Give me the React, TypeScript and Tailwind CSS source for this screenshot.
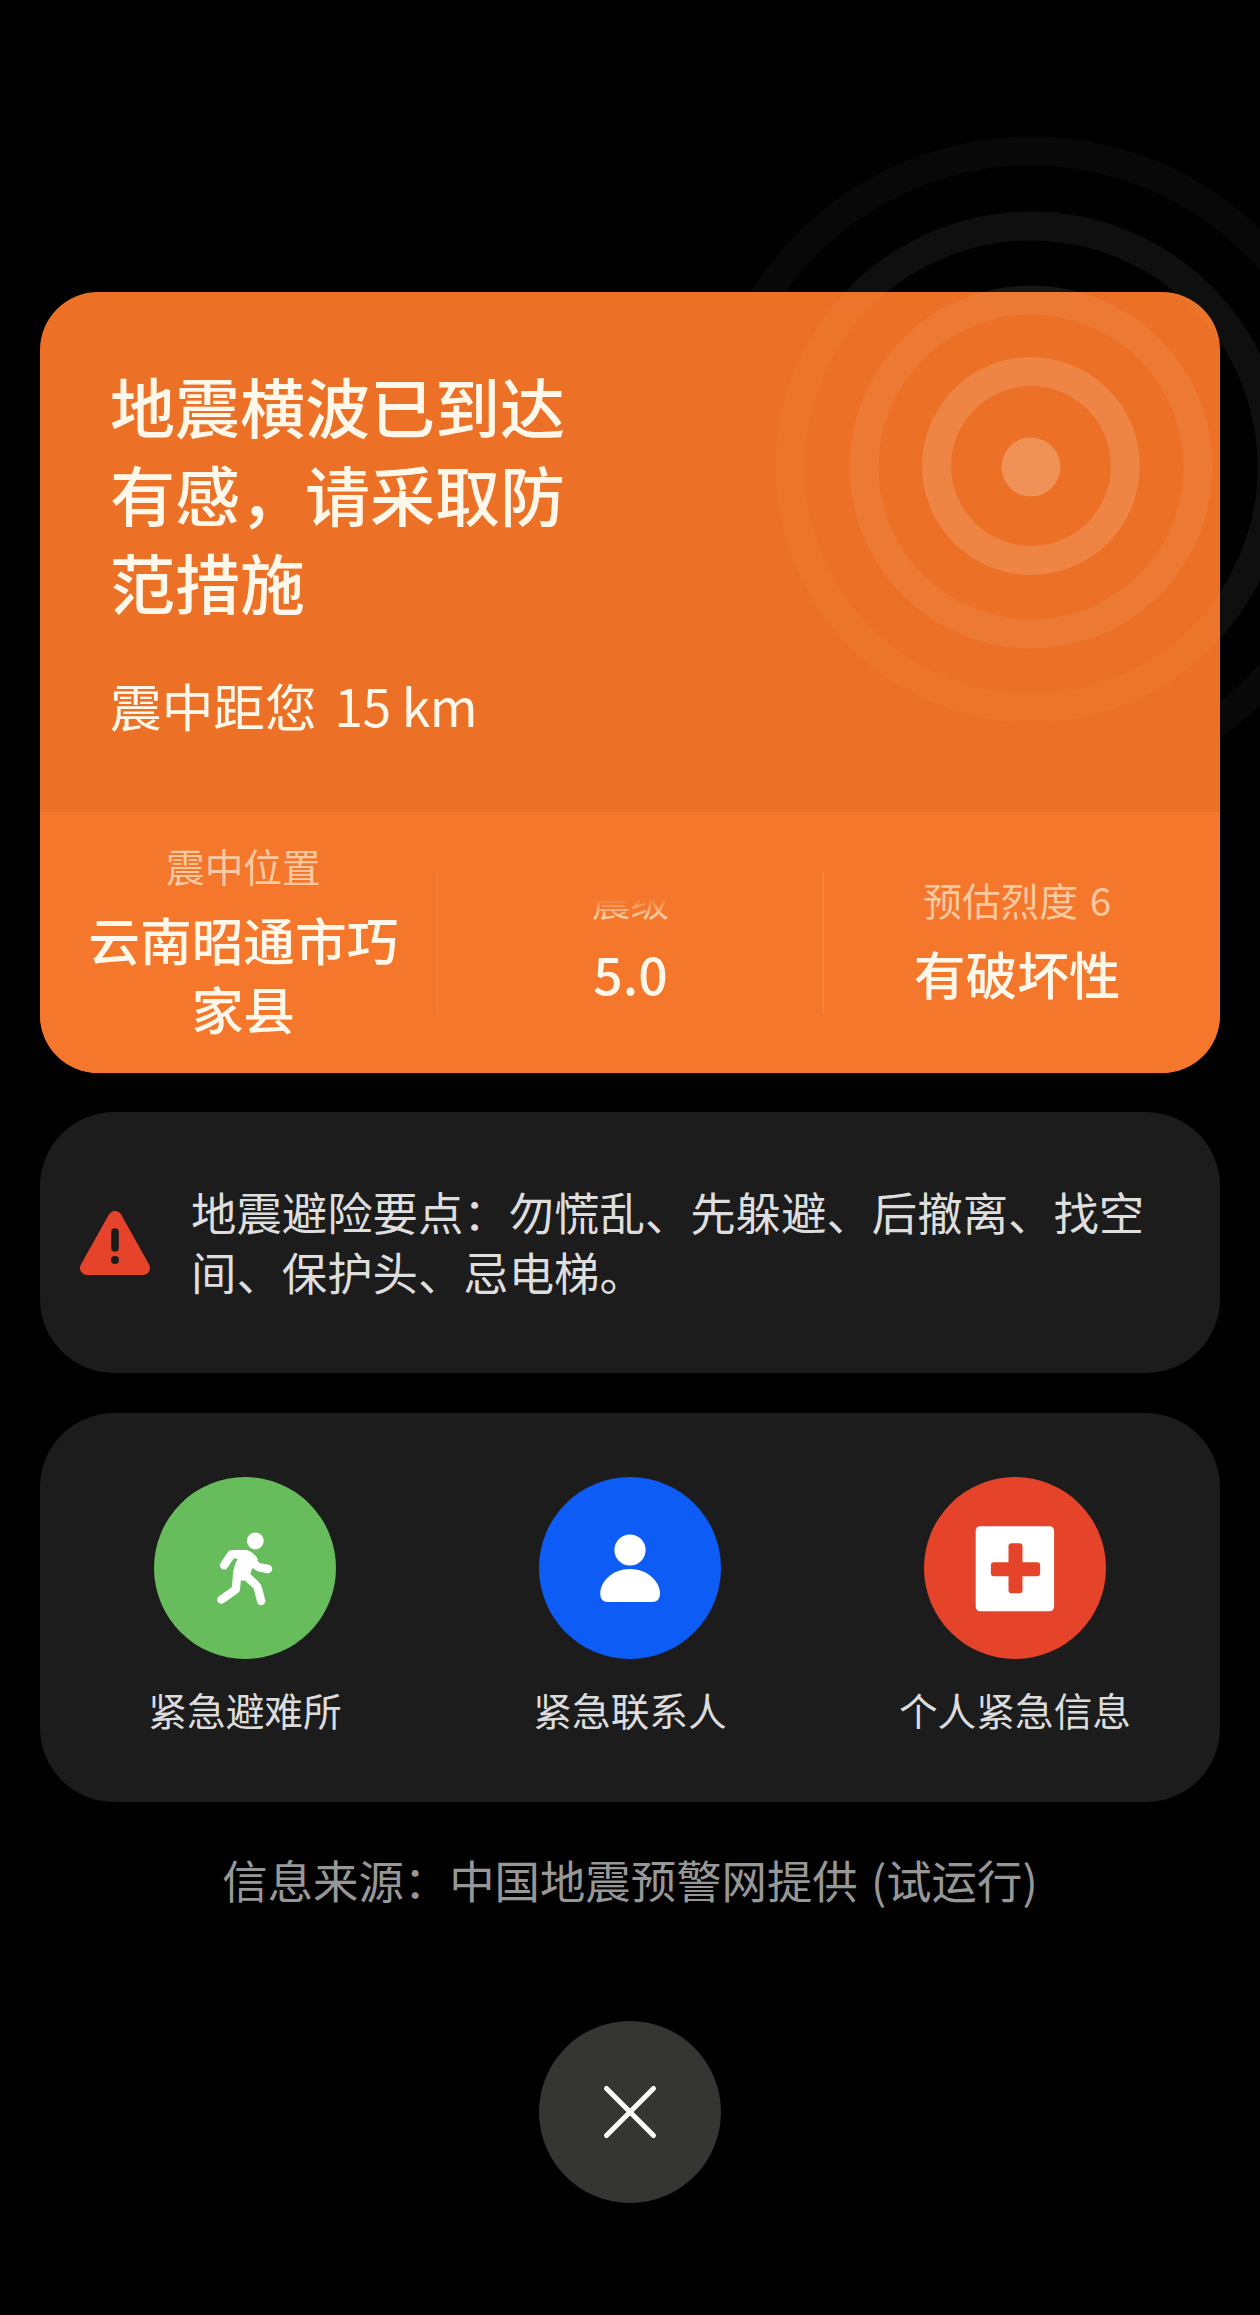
import type { ReactNode } from "react";
import { clsx } from "clsx";

const stats = [
    { label: "震中位置", value: "云南昭通市巧家县" },
    { label: "震级", value: "5.0", fading: true },
    { label: "预估烈度 6", value: "有破坏性" },
];

function RunnerIcon() {
    return (
        <svg viewBox="0 0 182 182" className="size-full" fill="none" stroke="#fff" strokeWidth="8.4" strokeLinecap="round" strokeLinejoin="round">
            <circle cx="101.3" cy="64" r="8.4" fill="#fff" stroke="none" />
            <path d="M77 73 H91 Q98 73.5 104 82 L100 90 Q97 92 97 96 L89.5 104 L79 101 Q78.2 92 83.5 82 Z" fill="#fff" stroke="none" />
            <path d="M70 88.3 L77.6 77.2 H91 Q95 77.5 98.5 83 Q101 89 105.5 90.4 L114 92" />
            <path d="M83.2 98 L81.8 112.4 L67.4 122.6" />
            <path d="M89.5 96.7 L102 108 Q103.6 109.5 104.3 113 L107.2 124" />
        </svg>
    );
}

function ContactIcon() {
    return (
        <svg viewBox="0 0 182 182" className="size-full" fill="#fff">
            <circle cx="91" cy="73" r="15.6" />
            <path d="M61.2 116.5 C61.2 105 73 92 91 92 S121 105 121 116.5 Q121 125 113 125 H69 Q61.2 125 61.2 116.5 Z" />
        </svg>
    );
}

function MedicalIcon() {
    return (
        <svg viewBox="0 0 182 182" className="size-full">
            <rect x="51.7" y="49.3" width="78.4" height="85" rx="4.5" fill="#fff" />
            <rect x="84.5" y="66.3" width="14" height="50" rx="3" fill="#e6432b" />
            <rect x="66.9" y="85.3" width="49.2" height="14" rx="3" fill="#e6432b" />
        </svg>
    );
}

function WarningIcon() {
    return (
        <svg viewBox="0 0 70 64" className="w-[70px] h-16 shrink-0">
            <path d="M35 7 L7 57 H63 Z" fill="#e6432b" stroke="#e6432b" strokeWidth="14" strokeLinejoin="round" />
            <path d="M35 21 V37" stroke="#1c1c1c" strokeWidth="7.6" strokeLinecap="round" />
            <circle cx="35" cy="49" r="4" fill="#1c1c1c" />
        </svg>
    );
}

function Action({ color, label, children }: { color: string; label: string; children: ReactNode }) {
    return (
        <button className="flex w-[385px] flex-col items-center">
            <span className={clsx("size-[182px] rounded-full", color)}>{children}</span>
            <span className="mt-6 text-[38.7px] leading-[52px] text-[#dcdcdc]">{label}</span>
        </button>
    );
}

export default function App() {
    return (
        <main className="relative flex h-[2315px] w-[1260px] flex-col items-center overflow-hidden bg-[#010101] px-10 pt-[292px] font-['Noto_Sans_CJK_SC',sans-serif]">
            {/* part of the ripple that spills out of the card */}
            <svg viewBox="0 0 700 700" className="absolute left-[681px] top-[117px] size-[700px]" fill="none" stroke="#fff" strokeWidth="29">
                <circle cx="350" cy="350" r="167" strokeOpacity="0.09" />
                <circle cx="350" cy="350" r="241" strokeOpacity="0.06" />
                <circle cx="350" cy="350" r="316" strokeOpacity="0.03" />
            </svg>

            <section className="relative flex h-[781px] w-full flex-col overflow-hidden rounded-[58px] bg-[#ec7126] text-[#fff8ea]">
                <svg viewBox="0 0 700 700" className="absolute left-[641px] top-[-175px] size-[700px]" fill="none" stroke="#fff" strokeWidth="29">
                    <circle cx="350" cy="350" r="29.5" fill="#fff" fillOpacity="0.23" stroke="none" />
                    <circle cx="350" cy="349" r="94.4" strokeOpacity="0.14" />
                    <circle cx="350" cy="350" r="167" strokeOpacity="0.065" />
                    <circle cx="350" cy="350" r="241" strokeOpacity="0.032" />
                    <circle cx="350" cy="350" r="316" strokeOpacity="0.004" />
                </svg>
                <div className="relative h-[520px] pl-[70px] pt-[69px]">
                    <h1 className="w-[460px] text-[65px] font-medium leading-[88px]">地震横波已到达有感，请采取防范措施</h1>
                    <p className="mt-[45px] text-[51.7px] leading-[70px]">
                        震中距您 <span className="ml-1.5 tracking-[-0.5px]">15 km</span>
                    </p>
                </div>
                <div className="relative flex h-[261px] items-center bg-[#f5772c] px-[10px]">
                    {stats.map((stat, i) => (
                        <div key={stat.label} className={clsx("flex h-[141px] w-[387px] flex-col items-center justify-center px-8 pb-[5px] text-center", i > 0 && "border-l border-white/15")}>
                            <span
                                className={clsx(
                                    "text-[38.7px] leading-[52px] text-[#fbc9a0] [word-spacing:3px]",
                                    stat.fading && "[mask-image:linear-gradient(to_bottom,transparent_46%,#0002_54%,black_82%)]"
                                )}
                            >
                                {stat.label}
                            </span>
                            <span className="mt-[13px] w-[312px] text-[51.7px] font-medium leading-[69px]">{stat.value}</span>
                        </div>
                    ))}
                </div>
            </section>

            <section className="relative mt-[39px] flex h-[261px] w-full items-center rounded-[74px] bg-[#1c1c1c] pl-10">
                <WarningIcon />
                <p className="ml-[41px] w-[960px] pb-[4px] text-[45.4px] leading-[60px] text-[#dedede]">
                    地震避险要点：勿慌乱、先躲避、后撤离、找空间、保护头、忌电梯。
                </p>
            </section>

            <section className="mt-10 flex h-[389px] w-full justify-center rounded-[74px] bg-[#1c1c1c] pt-16">
                <Action color="bg-[#67bd5c]" label="紧急避难所">
                    <RunnerIcon />
                </Action>
                <Action color="bg-[#0d5cf6]" label="紧急联系人">
                    <ContactIcon />
                </Action>
                <Action color="bg-[#e6432b]" label="个人紧急信息">
                    <MedicalIcon />
                </Action>
            </section>

            <p className="mt-[47px] text-[45.4px] leading-[60px] text-[#979797] [word-spacing:3px]">信息来源：中国地震预警网提供 (试运行)</p>

            <button className="mt-28 size-[182px] rounded-full bg-[#353534]">
                <svg viewBox="0 0 182 182" className="size-full" stroke="#fff" strokeWidth="5" strokeLinecap="round">
                    <path d="M67.5 67.5 L114.5 114.5 M114.5 67.5 L67.5 114.5" />
                </svg>
            </button>
        </main>
    );
}
